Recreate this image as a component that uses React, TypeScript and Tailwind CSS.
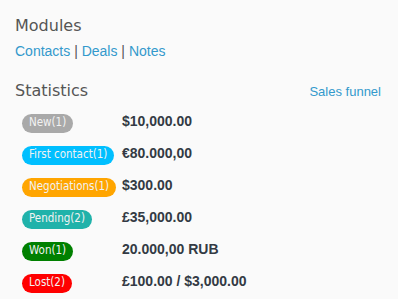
import React from "react";

const stats = [
  { label: "New(1)", color: "bg-[#a9a9a9]", amount: "$10,000.00" },
  { label: "First contact(1)", color: "bg-[#00bfff]", amount: "€80.000,00" },
  { label: "Negotiations(1)", color: "bg-[#ffa500]", amount: "$300.00" },
  { label: "Pending(2)", color: "bg-[#20b2aa]", amount: "£35,000.00" },
  { label: "Won(1)", color: "bg-[#008000]", amount: "20.000,00 RUB" },
  { label: "Lost(2)", color: "bg-[#ff0000]", amount: "£100.00 / $3,000.00" },
];

export default function App() {
  return (
    <div className="h-[299px] w-[398px] overflow-hidden bg-[#fafafa] px-[15px] pt-[16px]">
      {/* Modules */}
      <h3 className="font-['DejaVu_Sans',sans-serif] text-[16px] leading-[20px] text-[#555]">Modules</h3>
      <div className="mt-[6px] font-['Liberation_Sans',Arial,sans-serif] text-[14px] leading-[18px] text-[#555]">
        <a className="text-[#3399cc]">Contacts</a> | <a className="text-[#3399cc]">Deals</a> |{" "}
        <a className="text-[#3399cc]">Notes</a>
      </div>

      {/* Statistics */}
      <div className="mt-[21px] flex items-baseline justify-between pr-[2px]">
        <h3 className="font-['DejaVu_Sans',sans-serif] text-[16px] leading-[20px] text-[#555]">Statistics</h3>
        <a className="font-['Liberation_Sans',Arial,sans-serif] text-[13px] leading-[18px] text-[#3399cc]">
          Sales funnel
        </a>
      </div>

      <ul className="mt-[10px] flex flex-col gap-[13px] pl-[7px]">
        {stats.map((s) => (
          <li key={s.label} className="flex h-[19px] items-center">
            <span className="w-[100px]">
              <span
                className={`${s.color} inline-flex h-[19px] items-center rounded-full px-[7px] font-['DejaVu_Sans_Condensed','DejaVu_Sans',sans-serif] text-[11.5px] text-[#f2f2f2]`}
              >
                {s.label}
              </span>
            </span>
            <span className="font-['Liberation_Sans',Arial,sans-serif] text-[14px] font-bold leading-[18px] text-[#333a44]">
              {s.amount}
            </span>
          </li>
        ))}
      </ul>
    </div>
  );
}
